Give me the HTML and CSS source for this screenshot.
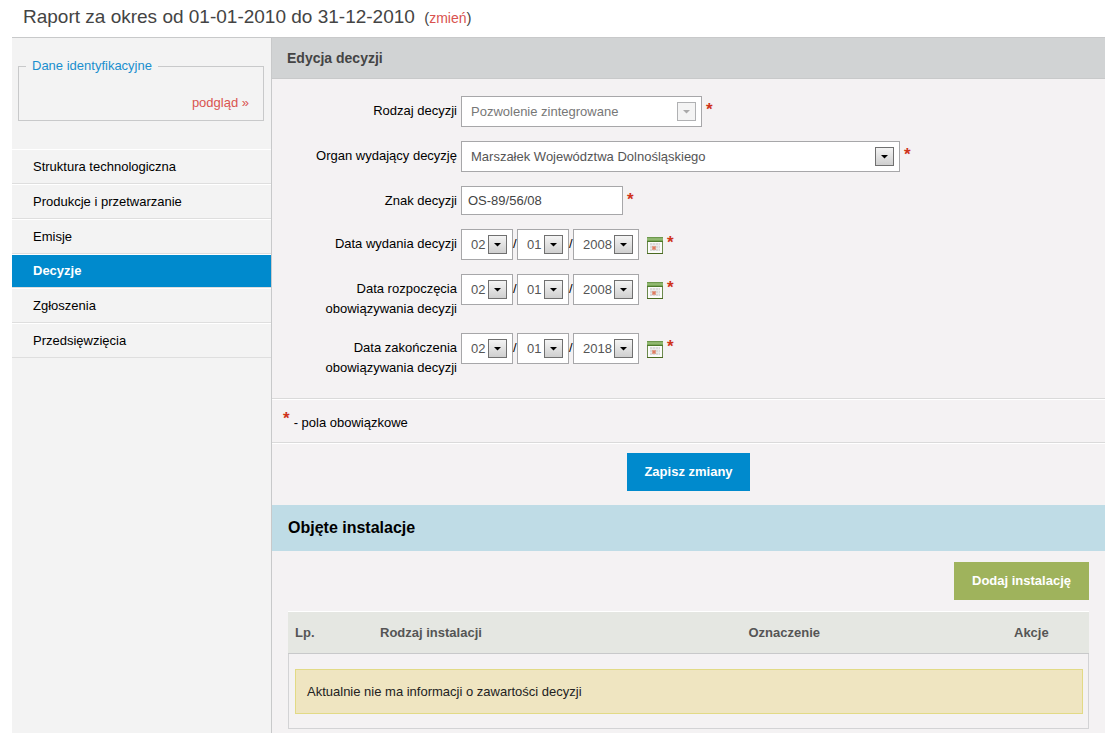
FILE: index.html
```html
<!DOCTYPE html>
<html lang="pl">
<head>
<meta charset="utf-8">
<title>Raport – Edycja decyzji</title>
<link rel="stylesheet" href="styles.css">
</head>
<body>
<svg class="defs" width="0" height="0" aria-hidden="true">
  <defs>
    <linearGradient id="cal-head" x1="0" y1="0" x2="0" y2="1">
      <stop offset="0" stop-color="#5c8a3c"/>
      <stop offset="0.5" stop-color="#9cc27c"/>
      <stop offset="1" stop-color="#6f9d4c"/>
    </linearGradient>
    <symbol id="calendar" viewBox="0 0 16 17">
      <rect x="0.5" y="0.5" width="15" height="16" rx="0.5" fill="#fbfbf9" stroke="#6b8a4c"/>
      <rect x="0" y="0" width="16" height="4" fill="url(#cal-head)"/>
      <rect x="0" y="4" width="16" height="1" fill="#4d7a2c"/>
      <rect x="0" y="16" width="16" height="1" fill="#4a6a20"/>
      <rect x="3" y="6" width="10" height="8" fill="#d9d9d9"/>
      <path d="M3 8.500h10M3 11.500h10M5.500 6v8M8.500 6v8M11.500 6v8" stroke="#e9e9e9" fill="none"/>
      <rect x="5" y="9" width="4" height="4" fill="#dfa08c"/>
      <rect x="6" y="10" width="2" height="2" fill="#e07a62"/>
    </symbol>
  </defs>
</svg>
<div class="page">
  <h1 class="title">Raport za okres od 01-01-2010 do 31-12-2010 <span class="change">(<a href="#">zmień</a>)</span></h1>
  <div class="columns">
    <aside class="sidebar">
      <fieldset class="ident">
        <legend>Dane identyfikacyjne</legend>
        <a href="#">podgląd »</a>
      </fieldset>
      <nav>
        <ul class="menu">
          <li><a href="#">Struktura technologiczna</a></li>
          <li><a href="#">Produkcje i przetwarzanie</a></li>
          <li><a href="#">Emisje</a></li>
          <li class="active"><a href="#">Decyzje</a></li>
          <li><a href="#">Zgłoszenia</a></li>
          <li><a href="#">Przedsięwzięcia</a></li>
        </ul>
      </nav>
    </aside>
    <main class="content">
      <h2 class="bar">Edycja decyzji</h2>
      <form>
        <div class="fields">
          <div class="row">
            <label for="kind">Rodzaj decyzji</label>
            <div class="controls">
              <span class="select kind off"><select id="kind" disabled><option>Pozwolenie zintegrowane</option></select><span class="arrow"></span></span>
              <span class="req">*</span>
            </div>
          </div>
          <div class="row">
            <label for="organ">Organ wydający decyzję</label>
            <div class="controls">
              <span class="select organ"><select id="organ"><option>Marszałek Województwa Dolnośląskiego</option></select><span class="arrow"></span></span>
              <span class="req">*</span>
            </div>
          </div>
          <div class="row">
            <label for="sign">Znak decyzji</label>
            <div class="controls">
              <input class="text" id="sign" type="text" value="OS-89/56/08">
              <span class="req">*</span>
            </div>
          </div>
          <div class="row">
            <label for="issued">Data wydania decyzji</label>
            <div class="controls">
              <span class="select"><select id="issued"><option>02</option></select><span class="arrow"></span></span><span class="slash">/</span><span class="select"><select aria-label="Miesiąc"><option>01</option></select><span class="arrow"></span></span><span class="slash">/</span><span class="select year"><select aria-label="Rok"><option>2008</option></select><span class="arrow"></span></span>
              <button class="calendar" type="button" aria-label="Kalendarz"><svg width="16" height="17"><use href="#calendar"/></svg></button>
              <span class="req">*</span>
            </div>
          </div>
          <div class="row">
            <label for="start">Data rozpoczęcia obowiązywania decyzji</label>
            <div class="controls">
              <span class="select"><select id="start"><option>02</option></select><span class="arrow"></span></span><span class="slash">/</span><span class="select"><select aria-label="Miesiąc"><option>01</option></select><span class="arrow"></span></span><span class="slash">/</span><span class="select year"><select aria-label="Rok"><option>2008</option></select><span class="arrow"></span></span>
              <button class="calendar" type="button" aria-label="Kalendarz"><svg width="16" height="17"><use href="#calendar"/></svg></button>
              <span class="req">*</span>
            </div>
          </div>
          <div class="row">
            <label for="end">Data zakończenia obowiązywania decyzji</label>
            <div class="controls">
              <span class="select"><select id="end"><option>02</option></select><span class="arrow"></span></span><span class="slash">/</span><span class="select"><select aria-label="Miesiąc"><option>01</option></select><span class="arrow"></span></span><span class="slash">/</span><span class="select year"><select aria-label="Rok"><option>2018</option></select><span class="arrow"></span></span>
              <button class="calendar" type="button" aria-label="Kalendarz"><svg width="16" height="17"><use href="#calendar"/></svg></button>
              <span class="req">*</span>
            </div>
          </div>
        </div>
        <p class="note"><span class="req">*</span>- pola obowiązkowe</p>
        <div class="submit"><button class="btn" type="submit">Zapisz zmiany</button></div>
      </form>
      <h2 class="section">Objęte instalacje</h2>
      <div class="installations">
        <button class="btn add" type="button">Dodaj instalację</button>
        <table class="grid">
          <thead>
            <tr><th class="no">Lp.</th><th class="type">Rodzaj instalacji</th><th>Oznaczenie</th><th class="actions">Akcje</th></tr>
          </thead>
          <tbody>
            <tr><td colspan="4"><div class="info">Aktualnie nie ma informacji o zawartości decyzji</div></td></tr>
          </tbody>
        </table>
      </div>
    </main>
  </div>
</div>
</body>
</html>
```
FILE: styles.css
```css
* {
  box-sizing: border-box;
}

body {
  margin: 0;
  background: #fff;
  color: #000;
  font: 13px/20px "Liberation Sans", Arial, sans-serif;
}

a {
  color: #d9534f;
  text-decoration: none;
}

.defs {
  position: absolute;
}

.page {
  display: flex;
  flex-direction: column;
  min-height: 100vh;
  padding: 0 11px 0 12px;
}

.title {
  margin: 0;
  padding: 5px 11px 8px;
  color: #444;
  font-size: 19px;
  font-weight: normal;
  line-height: 24px;
}

.change {
  margin-left: 4px;
  font-size: 15px;
  line-height: 1;
}

.change a {
  font-size: 14px;
}

.columns {
  display: flex;
  flex: 1;
  border-top: 1px solid #c8c9ca;
}

.sidebar {
  flex: 0 0 260px;
  padding-top: 18px;
  border-right: 1px solid #c8c9ca;
  background: #f3f3f3;
}

.ident {
  margin: 0 7px 28px 6px;
  padding: 17px 14px 7px 7px;
  border: 1px solid #c8c9ca;
}

.ident a {
  display: block;
  text-align: right;
}

.ident legend {
  padding: 0 6px;
  color: #1a8fce;
}

.menu {
  margin: 0;
  padding: 0;
  list-style: none;
}

.menu a {
  display: block;
  padding: 7px 21px 6px;
  border-top: 1px solid #fff;
  border-bottom: 1px solid #dedede;
  color: #000;
}

.menu .active a {
  padding-bottom: 6px;
  padding-top: 6px;
  background: #008acd;
  color: #fff;
  font-weight: bold;
}

.content {
  flex: 1;
  min-width: 0;
  background: #f4f2f3;
}

.bar {
  margin: 0;
  padding: 10px 15px;
  border-bottom: 1px solid #c8c9ca;
  background: #d1d3d4;
  color: #444;
  font-size: 14px;
  line-height: 20px;
}

.fields {
  display: grid;
  gap: 14px;
  padding: 17px 0 20px;
  border-bottom: 1px solid #dadada;
}

.row {
  display: grid;
  grid-template-columns: 185px 1fr;
  gap: 4px;
}

.row label {
  padding: 5px 0 0 20px;
  text-align: right;
}

.controls {
  display: flex;
  align-items: flex-start;
}

.select {
  display: grid;
  width: 52px;
  height: 31px;
}

.select select,
.arrow {
  grid-area: 1 / 1;
}

.select select {
  width: 100%;
  margin: 0;
  padding: 0 9px;
  border: 1px solid #a7a7a9;
  border-radius: 0;
  background: #fff;
  color: #555;
  font: inherit;
  appearance: none;
}

.arrow {
  display: grid;
  place-items: center;
  place-self: center end;
  width: 19px;
  height: 19px;
  margin-right: 6px;
  border: 1px solid #707070;
  background: linear-gradient(#f4f4f4, #cfcfcf);
  pointer-events: none;
}

.arrow::after {
  width: 8px;
  height: 4px;
  background: #000;
  clip-path: polygon(0 0, 100% 0, 50% 100%);
  content: "";
}

.off select {
  color: #777;
  opacity: 1;
}

.off .arrow {
  border-color: #b0b1b3;
  background: #f4f4f4;
}

.off .arrow::after {
  background: #aaa;
}

.year {
  width: 66px;
}

.kind {
  width: 241px;
}

.organ {
  width: 439px;
}

.text {
  width: 162px;
  height: 29px;
  margin: 0;
  padding: 0 6px;
  border: 1px solid #a7a7a9;
  border-radius: 0;
  background: #fff;
  color: #444;
  font: inherit;
}

.slash {
  width: 4px;
  padding-top: 5px;
}

.calendar {
  display: block;
  margin: 8px 0 0 8px;
  padding: 0;
  border: 0;
  background: none;
}

.calendar svg {
  display: block;
}

.req {
  margin-left: 4px;
  color: #cf331b;
  font-size: 17px;
  font-weight: bold;
  line-height: 27px;
}

.note {
  display: flex;
  margin: 0;
  padding: 5px 7px 1px;
  border-top: 1px solid #fff;
  border-bottom: 1px solid #dadada;
  line-height: 36px;
}

.note .req {
  margin-right: 4px;
}

.submit {
  padding: 9px 0 14px;
  border-top: 1px solid #fff;
  text-align: center;
}

.btn {
  display: inline-block;
  height: 38px;
  padding: 0 17px;
  border: 0;
  background: #008acd;
  color: #fff;
  font: bold 13px/20px "Liberation Sans", Arial, sans-serif;
  vertical-align: top;
}

.section {
  margin: 0;
  padding: 13px 16px;
  background: #bfdce6;
  font-size: 16px;
  line-height: 20px;
}

.installations {
  display: flex;
  flex-direction: column;
  gap: 11px;
  padding: 11px 16px 4px;
}

.add {
  align-self: flex-end;
  padding: 0 18px;
  background: #9fb35c;
}

.grid {
  width: 100%;
  border-collapse: separate;
  border-spacing: 0;
  table-layout: fixed;
}

.grid th {
  padding: 11px 7px 10px;
  border-top: 1px solid #fff;
  border-bottom: 1px solid #c8c9ca;
  background: #e5e7e2;
  color: #555;
  text-align: left;
}

.grid .no {
  width: 85px;
}

.grid .type {
  width: 46%;
}

.grid .actions {
  width: 82px;
}

.grid td {
  padding: 15px 5px 14px 6px;
  border: 1px solid #d3d3d5;
  border-top: 0;
}

.info {
  padding: 12px 11px 11px;
  border: 1px solid #e2da86;
  background: #efe5c1;
  color: #222;
}
```
